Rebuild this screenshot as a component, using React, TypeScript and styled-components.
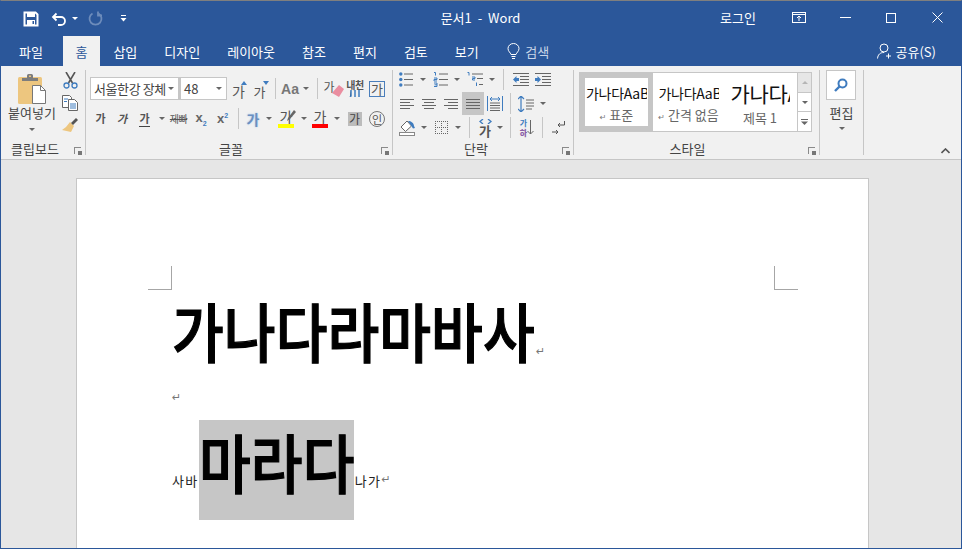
import React from 'react';
import styled, { createGlobalStyle } from 'styled-components';

const KR = `"Noto Sans CJK KR", "Noto Sans", sans-serif`;

const Global = createGlobalStyle`
  html, body { margin: 0; padding: 0; background: #e6e6e6; }
  body { font-family: ${KR}; overflow: hidden; }
  * { box-sizing: border-box; }
`;

const Blue = '#2b579a';
const IconBlue = '#3f7cbf';

const Down = () => <Caret />;

const App: React.FC = () => (
  <>
    <Global />
    <Win>
      <TitleBar>
        <Quick>
          <QuickCell $w={26} style={{ marginLeft: 17 }}>
            <svg width="16" height="16" viewBox="0 0 16 16">
              <path d="M1.5 1.5h11l2 2v11h-13z" fill="none" stroke="#fff" strokeWidth="2" />
              <rect x="4" y="2" width="8" height="4" fill="#fff" />
              <rect x="4" y="9" width="8" height="5" fill="#fff" />
              <rect x="9.5" y="10" width="1.5" height="3" fill={Blue} />
            </svg>
          </QuickCell>
          <QuickCell $w={22} style={{ marginLeft: 4 }}>
            <svg width="16" height="14" viewBox="0 0 16 14" fill="none" stroke="#fff" strokeWidth="1.8">
              <path d="M5.5 1.5 2 5l3.5 3.5" />
              <path d="M2.5 5H10a4 4 0 0 1 0 8H7" />
            </svg>
          </QuickCell>
          <LightCaret />
          <QuickCell $w={24} style={{ marginLeft: 5 }}>
            <svg width="15" height="15" viewBox="0 0 15 15" fill="none" stroke="#6d8cbb" strokeWidth="1.8">
              <path d="M10.5 2.5a6 6 0 1 1-6 0" />
              <path d="M10 .5v4h4" />
            </svg>
          </QuickCell>
          <QuickCell $w={14} style={{ marginLeft: 9 }}>
            <svg width="7" height="7" viewBox="0 0 7 7" fill="#fff">
              <rect x="1" y="0" width="5" height="1" />
              <path d="M0.5 3h6L3.5 6.5z" />
            </svg>
          </QuickCell>
        </Quick>
        <Title>문서1 - Word</Title>
        <WinButtons>
          <Login>로그인</Login>
          <WinBtn>
            <svg width="14" height="11" viewBox="0 0 14 11" fill="none" stroke="#fff">
              <rect x=".5" y=".5" width="13" height="10" />
              <path d="M.5 2.5h13M7 9V4.5M5 6l2-2 2 2" />
            </svg>
          </WinBtn>
          <WinBtn>
            <svg width="11" height="1" viewBox="0 0 11 1"><rect width="11" height="1" fill="#fff" /></svg>
          </WinBtn>
          <WinBtn>
            <svg width="10" height="10" viewBox="0 0 10 10"><rect x=".5" y=".5" width="9" height="9" fill="none" stroke="#fff" /></svg>
          </WinBtn>
          <WinBtn>
            <svg width="11" height="11" viewBox="0 0 11 11" stroke="#fff"><path d="M.5.5l10 10M10.5.5l-10 10" /></svg>
          </WinBtn>
        </WinButtons>
      </TitleBar>

      <TabBar>
        <Tab style={{ marginLeft: 4, padding: '0 14px' }}>파일</Tab>
        <Tab $active>홈</Tab>
        <Tab>삽입</Tab>
        <Tab>디자인</Tab>
        <Tab>레이아웃</Tab>
        <Tab>참조</Tab>
        <Tab>편지</Tab>
        <Tab>검토</Tab>
        <Tab>보기</Tab>
        <SearchHint>
          <svg width="13" height="17" viewBox="0 0 13 17" fill="none" stroke="#fff">
            <path d="M4 11.5C3.5 9.5 1 8.5 1 5.5a5.5 5 0 0 1 11 0c0 3-2.500 4-3 6z" />
            <path d="M4.500 13.500h4M5 15.500h3" />
          </svg>
          검색
        </SearchHint>
        <Share>
          <svg width="15" height="16" viewBox="0 0 15 16" fill="none" stroke="#fff">
            <circle cx="7" cy="5" r="4" />
            <path d="M.5 15.500C1 11.500 3 9.500 7 9.500M11.500 10.500v5M9 13h5" />
          </svg>
          공유(S)
        </Share>
      </TabBar>

      <Ribbon>
        <Group $w={84}>
          <ClipBody>
            <PasteCol>
              <svg width="30" height="31" viewBox="0 0 30 31">
                <rect x="1" y="3" width="24" height="27" rx="1.500" fill="#edc67f" />
                <path d="M5 7V4h5V1.500A1.500 1.500 0 0 1 11.500 0h3A1.500 1.500 0 0 1 16 1.500V4h5v3z" fill="#7d7d7d" />
                <rect x="12" y="1.500" width="2" height="1.500" fill="#edc67f" />
                <path d="M15.500 11.500h8l5 5v13h-13z" fill="#fff" stroke="#777" />
                <path d="M23.500 11.500v5h5" fill="none" stroke="#777" />
              </svg>
              <PasteLabel>붙여넣기</PasteLabel>
              <Down />
            </PasteCol>
            <ClipTools>
              <Cell $w={24} $h={22}>
                <svg width="15" height="17" viewBox="0 0 15 17" fill="none">
                  <path d="M3 0l6.500 11M12 0L5.500 11" stroke="#555" strokeWidth="1.600" />
                  <circle cx="3.500" cy="13.500" r="2.500" stroke={IconBlue} strokeWidth="1.300" />
                  <circle cx="11.500" cy="13.500" r="2.500" stroke={IconBlue} strokeWidth="1.300" />
                </svg>
              </Cell>
              <Cell $w={24} $h={23}>
                <svg width="16" height="16" viewBox="0 0 16 16" fill="#fff" stroke="#666">
                  <path d="M.5.5h7l2 2v10h-9z" />
                  <path d="M6.500 4.500h6l3 3v8h-9z" />
                  <path d="M8 9h6M8 11h6M8 13h6M2 4h4M2 6.500h3" stroke={IconBlue} />
                </svg>
              </Cell>
              <Cell $w={24} $h={23}>
                <svg width="16" height="15" viewBox="0 0 16 15">
                  <path d="M8 4l4 4-3 6-9-2 4-3z" fill="#edc67f" />
                  <path d="M9 5l5-5 2 2-5 5z" fill="#555" />
                </svg>
              </Cell>
            </ClipTools>
          </ClipBody>
          <GroupLabel $shift={16}>클립보드<Launcher /></GroupLabel>
        </Group>
        <Sep />

        <Group $w={306}>
          <FontBody>
            <Row>
              <Combo $w={90}><FontName>서울한강 장체</FontName><Down /></Combo>
              <Combo $w={47} style={{ marginRight: 3 }}>48<Down /></Combo>
              <Cell $w={20}><Ga>가</Ga><Mark $dir="up" /></Cell>
              <Cell $w={22}><Ga $small>가</Ga><Mark $dir="down" /></Cell>
              <Cell $w={7}><VLine /></Cell>
              <Cell $w={22}><Aa>Aa</Aa></Cell>
              <Cell $w={10}><Down /></Cell>
              <Cell $w={12}><VLine /></Cell>
              <Cell $w={21}>
                <EraseGa>가</EraseGa>
                <svg width="12" height="12" viewBox="0 0 12 12" style={{ marginLeft: -3, marginTop: 4 }}>
                  <path d="M7 0l5 4-5 8-7-4z" fill="#ea8ea0" />
                </svg>
              </Cell>
              <Cell $w={22}>
                <Stack>
                  <Tiny>내천</Tiny>
                  <svg width="12" height="7" viewBox="0 0 12 7" stroke={IconBlue} strokeWidth="1.500">
                    <path d="M2 0v6l-1 1M6 0v7M10 0v7" />
                  </svg>
                </Stack>
              </Cell>
              <Cell $w={22}><BoxGa>가</BoxGa></Cell>
            </Row>
            <Row $gap={7}>
              <Cell $w={21}><Ga $bold $tiny>가</Ga></Cell>
              <Cell $w={22}><Ga $bold $italic $tiny>가</Ga></Cell>
              <Cell $w={23}><Ga $bold $tiny $under>가</Ga></Cell>
              <Cell $w={11}><Down /></Cell>
              <Cell $w={23}><Strike>제빠</Strike></Cell>
              <Cell $w={22}><Script>x<sub>2</sub></Script></Cell>
              <Cell $w={21}><Script>x<sup>2</sup></Script></Cell>
              <Cell $w={10}><VLine /></Cell>
              <Cell $w={20}><GlowGa>가</GlowGa></Cell>
              <Cell $w={11}><Down /></Cell>
              <Cell $w={24}>
                <ColorGa $bar="#ffff00">가</ColorGa>
                <Pen width="9" height="11" viewBox="0 0 9 11"><path d="M7 0l2 2-6 7-3 2 1-3z" fill="#666" /></Pen>
              </Cell>
              <Cell $w={11}><Down /></Cell>
              <Cell $w={22}><ColorGa $bar="#ff0000">가</ColorGa></Cell>
              <Cell $w={12}><Down /></Cell>
              <Cell $w={23}><ShadeGa>가</ShadeGa></Cell>
              <Cell $w={22}><RingGa>인</RingGa></Cell>
            </Row>
          </FontBody>
          <GroupLabel $shift={16}>글꼴<Launcher /></GroupLabel>
        </Group>
        <Sep />

        <Group $w={180}>
          <ParaBody>
            <ParaRow>
              <Cell $w={20}><ListIcon kind="bullet" /></Cell>
              <Cell $w={14}><Down /></Cell>
              <Cell $w={21}><ListIcon kind="number" /></Cell>
              <Cell $w={12}><Down /></Cell>
              <Cell $w={24}><ListIcon kind="multi" /></Cell>
              <Cell $w={10}><Down /></Cell>
              <Cell $w={13}><VLine /></Cell>
              <Cell $w={22}><IndentIcon dir="out" /></Cell>
              <Cell $w={22}><IndentIcon dir="in" /></Cell>
            </ParaRow>
            <ParaRow>
              <Cell $w={22}><AlignIcon kind="left" /></Cell>
              <Cell $w={22}><AlignIcon kind="center" /></Cell>
              <Cell $w={22}><AlignIcon kind="right" /></Cell>
              <Cell $w={22} $on><AlignIcon kind="justify" /></Cell>
              <Cell $w={22}>
                <svg width="16" height="16" viewBox="0 0 16 16" fill="none">
                  <path d="M.5 0v15M15.500 0v15" stroke={IconBlue} />
                  <path d="M3 3h10M3 3l2-2M3 3l2 2M13 3l-2-2M13 3l-2 2" stroke={IconBlue} />
                  <path d="M3 7h10M3 9.500h10M3 12h10M3 14.500h10" stroke="#666" />
                </svg>
              </Cell>
              <Cell $w={8}><VLine /></Cell>
              <Cell $w={24}>
                <svg width="16" height="16" viewBox="0 0 16 16" fill="none">
                  <path d="M3 0v16M0 3l3-3 3 3M0 13l3 3 3-3" stroke={IconBlue} strokeWidth="1.200" />
                  <path d="M8 4h8M8 7h8M8 10h8M8 13h6" stroke="#666" />
                </svg>
              </Cell>
              <Cell $w={10}><Down /></Cell>
            </ParaRow>
            <ParaRow>
              <Cell $w={22}>
                <svg width="17" height="16" viewBox="0 0 17 16" fill="none">
                  <path d="M8 1L2 7l4.500 4.500L12.500 6z" stroke="#666" fill="#fff" />
                  <path d="M9 1c3 0 6 2 6 5l1 2-2 .5z" fill={IconBlue} />
                  <rect x=".5" y="12.500" width="15" height="3" stroke="#888" fill="#fff" />
                </svg>
              </Cell>
              <Cell $w={12}><Down /></Cell>
              <Cell $w={22}>
                <svg width="13" height="13" viewBox="0 0 13 13" stroke="#666" strokeDasharray="1 1">
                  <path d="M.5 0v13M6.500 0v13M12.500 0v13M0 .5h13M0 6.500h13M0 12.500h13" />
                </svg>
              </Cell>
              <Cell $w={12}><Down /></Cell>
              <Cell $w={10}><VLine /></Cell>
              <Cell $w={22}>
                <Stack>
                  <svg width="15" height="5" viewBox="0 0 15 5" stroke={IconBlue} strokeWidth="1.300" fill="none">
                    <path d="M5 0L2 2.500 5 5M10 0l3 2.500L10 5" />
                  </svg>
                  <DirGa>가</DirGa>
                </Stack>
              </Cell>
              <Cell $w={8}><Down /></Cell>
              <Cell $w={12}><VLine /></Cell>
              <Cell $w={22}>
                <SortGa>
                  <span>가</span>
                  <b>하</b>
                </SortGa>
                <svg width="7" height="15" viewBox="0 0 7 15" fill="none" stroke="#666"><path d="M3.500 0v14M.5 11l3 3 3-3" /></svg>
              </Cell>
              <Cell $w={8}><VLine /></Cell>
              <Cell $w={24}>
                <svg width="13" height="14" viewBox="0 0 13 14" fill="none" stroke="#555">
                  <path d="M12.500 0v4H6M8 2L6 4l2 2" />
                  <path d="M0 11h6M4 9l2 2-2 2" />
                </svg>
              </Cell>
            </ParaRow>
          </ParaBody>
          <GroupLabel $shift={14}>단락<Launcher /></GroupLabel>
        </Group>
        <Sep />

        <Group $w={245}>
          <Gallery>
            <Styles>
              <StyleItem $on $w={73}>
                <Sample $w={61}>가나다AaB</Sample>
                <StyleName><Ret>↵</Ret> 표준</StyleName>
              </StyleItem>
              <StyleItem $w={71}>
                <Sample $w={60}>가나다AaB</Sample>
                <StyleName><Ret>↵</Ret> 간격 없음</StyleName>
              </StyleItem>
              <StyleItem $w={72}>
                <Sample $w={59} $big>가나다A</Sample>
                <StyleName>제목 1</StyleName>
              </StyleItem>
            </Styles>
            <Scroller>
              <ScrollBtn $off><UpCaret /></ScrollBtn>
              <ScrollBtn><Down /></ScrollBtn>
              <ScrollBtn $last>
                <svg width="7" height="6" viewBox="0 0 7 6" fill="#666"><rect x="0" y="0" width="7" height="1" /><path d="M0 2.500h7L3.500 6z" /></svg>
              </ScrollBtn>
            </Scroller>
          </Gallery>
          <GroupLabel $shift={18}>스타일<Launcher /></GroupLabel>
        </Group>
        <Sep />

        <Group $w={43}>
          <EditCol>
            <EditBtn>
              <svg width="14" height="14" viewBox="0 0 14 14" fill="none" stroke={IconBlue}>
                <circle cx="8.500" cy="5.500" r="4" strokeWidth="2" />
                <path d="M5.500 8.500L1 13" strokeWidth="2.400" />
              </svg>
            </EditBtn>
            <EditLabel>편집</EditLabel>
            <Down />
          </EditCol>
        </Group>
        <Sep />
        <Collapse>
          <svg width="9" height="6" viewBox="0 0 9 6" fill="none" stroke="#555" strokeWidth="1.600"><path d="M.5 5l4-4 4 4" /></svg>
        </Collapse>
      </Ribbon>

      <DocArea>
        <Page>
          <Marks>
            <CropMark $side="left" />
            <CropMark $side="right" />
          </Marks>
          <BigLine>
            <BigText $w={364} $line={84}><span>가나다라마바사</span></BigText>
            <Pil $big>↵</Pil>
          </BigLine>
          <EmptyLine><Pil>↵</Pil></EmptyLine>
          <MixedLine>
            <Small>사바</Small>
            <Selected><BigText $w={155} $line={80}><span>마라다</span></BigText></Selected>
            <Small>나가</Small>
            <Pil $low>↵</Pil>
          </MixedLine>
        </Page>
      </DocArea>
    </Win>
  </>
);

const ListIcon: React.FC<{ kind: 'bullet' | 'number' | 'multi' }> = ({ kind }) => {
  if (kind === 'bullet') {
    return (
      <svg width="15" height="15" viewBox="0 0 15 15">
        <circle cx="1.800" cy="2" r="1.700" fill={IconBlue} />
        <circle cx="1.800" cy="7.500" r="1.700" fill={IconBlue} />
        <circle cx="1.800" cy="13" r="1.700" fill={IconBlue} />
        <path d="M5 2h9M5 7.500h9M5 13h9" stroke="#666" />
      </svg>
    );
  }
  if (kind === 'number') {
    return (
      <svg width="15" height="15" viewBox="0 0 15 15">
        <path d="M1 .5h1.500v3M1 6h3v1.500H1V9h3M1 11h3v3.500H1M1.500 12.800H4" stroke={IconBlue} fill="none" />
        <path d="M6 2h9M6 7.500h9M6 13h9" stroke="#666" />
      </svg>
    );
  }
  return (
    <svg width="17" height="15" viewBox="0 0 17 15">
      <path d="M.5.500H2v3M5 5h3v1.500H5.500V8H8M9.500 10.500V14" stroke={IconBlue} fill="none" />
      <path d="M5 2h11M10 6.500h6M12 12.500h4" stroke="#666" />
    </svg>
  );
};

const IndentIcon: React.FC<{ dir: 'in' | 'out' }> = ({ dir }) => (
  <svg width="16" height="13" viewBox="0 0 16 13">
    <path d="M0 .5h16M7 3.500h9M7 6.500h9M7 9.500h9M0 12.500h16" stroke="#666" />
    <path d={dir === 'out' ? 'M0 6.500L3.500 3v2H6v3H3.500v2z' : 'M6 6.500L2.500 3v2H0v3h2.500v2z'} fill={IconBlue} />
  </svg>
);

const AlignIcon: React.FC<{ kind: 'left' | 'center' | 'right' | 'justify' }> = ({ kind }) => {
  const d = {
    left: 'M0 1.500h14M0 4.500h10M0 7.500h14M0 10.500h10',
    center: 'M0 1.500h14M2 4.500h10M0 7.500h14M2 10.500h10',
    right: 'M0 1.500h14M4 4.500h10M0 7.500h14M4 10.500h10',
    justify: 'M0 1.500h14M0 4.500h14M0 7.500h14M0 10.500h14',
  }[kind];
  return (
    <svg width="14" height="12" viewBox="0 0 14 12"><path d={d} stroke="#666" /></svg>
  );
};

const Win = styled.div`
  width: 962px;
  height: 549px;
  display: flex;
  flex-direction: column;
  border: 1px solid ${Blue};
  border-top-color: #7f7f7f;
  background: #e6e6e6;
  overflow: hidden;
`;

const TitleBar = styled.header`
  height: 35px;
  flex: none;
  display: grid;
  grid-template-columns: 1fr auto 1fr;
  align-items: center;
  background: ${Blue};
  color: #fff;
  font-size: 13px;
`;

const Quick = styled.div`
  display: flex;
  align-items: center;
`;

const QuickCell = styled.div<{ $w: number }>`
  width: ${p => p.$w}px;
  display: flex;
  align-items: center;
  justify-content: center;
`;

const Title = styled.div`
  margin: -2px 0 0 -1px;
  font-size: 13px;
  word-spacing: 3px;
  color: #fff;
`;

const WinButtons = styled.div`
  display: flex;
  justify-content: flex-end;
  align-items: center;
  height: 100%;
  margin-top: -2px;
  padding-right: 1px;
`;

const Login = styled.div`
  margin-right: 20px;
  font-size: 13px;
`;

const WinBtn = styled.div`
  width: 46px;
  height: 100%;
  display: flex;
  align-items: center;
  justify-content: center;
`;

const TabBar = styled.nav`
  height: 30px;
  flex: none;
  display: flex;
  align-items: stretch;
  background: ${Blue};
  color: #fff;
  font-size: 13px;
`;

const Tab = styled.div<{ $active?: boolean }>`
  display: flex;
  align-items: center;
  padding: 0 ${p => (p.$active ? 12.5 : 13.5)}px;
  margin-left: ${p => (p.$active ? 6 : 0)}px;
  background: ${p => (p.$active ? '#f1f1f1' : 'transparent')};
  color: ${p => (p.$active ? Blue : '#fff')};
`;

const SearchHint = styled.div`
  display: flex;
  align-items: center;
  gap: 5px;
  margin-left: 15px;
  color: #c9d5e8;
`;

const Share = styled.div`
  display: flex;
  align-items: center;
  gap: 4px;
  margin-left: auto;
  margin-right: 25px;
`;

const Ribbon = styled.section`
  height: 94px;
  flex: none;
  display: flex;
  padding-top: 2px;
  background: #f1f1f1;
  border-bottom: 1px solid #c6c6c6;
  color: #444;
  font-size: 13px;
`;

const Sep = styled.div`
  flex: none;
  width: 1px;
  margin: 2px 0 4px;
  background: #c6c6c6;
`;

const Group = styled.div<{ $w: number }>`
  flex: none;
  width: ${p => p.$w}px;
  display: flex;
  flex-direction: column;
`;

const GroupLabel = styled.div<{ $shift?: number }>`
  position: relative;
  margin-top: auto;
  height: 19px;
  padding-bottom: 2px;
  padding-right: ${p => p.$shift || 0}px;
  display: flex;
  align-items: center;
  justify-content: center;
  font-size: 13px;
  color: #444;
`;

const Launcher = styled.i`
  position: absolute;
  right: 4px;
  top: 7px;
  width: 7px;
  height: 7px;
  border-left: 1px solid #8a8a8a;
  border-top: 1px solid #8a8a8a;
  &::after {
    content: '';
    position: absolute;
    right: -1px;
    bottom: -1px;
    width: 4px;
    height: 4px;
    background: #777;
  }
`;

const Caret = styled.i`
  display: inline-block;
  flex: none;
  width: 0;
  height: 0;
  border-left: 3px solid transparent;
  border-right: 3px solid transparent;
  border-top: 3px solid #666;
`;

const UpCaret = styled(Caret)`
  border-top: 0;
  border-bottom: 3px solid #b5b5b5;
`;

const LightCaret = styled(Caret)`
  border-top-color: #fff;
  margin-left: 2px;
`;

const ClipBody = styled.div`
  display: flex;
  padding-left: 3px;
`;

const PasteCol = styled.div`
  width: 56px;
  padding-top: 6px;
  display: flex;
  flex-direction: column;
  align-items: center;
`;

const PasteLabel = styled.div`
  margin: -1px 0 6px;
  line-height: 18px;
  white-space: nowrap;
`;

const ClipTools = styled.div`
  margin-left: -2px;
  margin-top: 1px;
  display: flex;
  flex-direction: column;
`;

const Cell = styled.div<{ $w: number; $h?: number; $on?: boolean }>`
  flex: none;
  position: relative;
  width: ${p => p.$w}px;
  height: ${p => (p.$h ? `${p.$h}px` : '100%')};
  display: flex;
  align-items: center;
  justify-content: center;
  background: ${p => (p.$on ? '#c6c6c6' : 'transparent')};
`;

const VLine = styled.div`
  width: 1px;
  height: 21px;
  background: #c6c6c6;
`;

const FontBody = styled.div`
  padding: 9px 0 0 4px;
`;

const Row = styled.div<{ $gap?: number }>`
  display: flex;
  height: 23px;
  margin-top: ${p => p.$gap || 0}px;
`;

const Combo = styled.div<{ $w: number }>`
  flex: none;
  width: ${p => p.$w}px;
  height: 23px;
  padding: 0 4px 0 3px;
  display: flex;
  align-items: center;
  justify-content: space-between;
  background: #fff;
  border: 1px solid #c6c6c6;
  border-right-width: ${p => (p.$w === 90 ? 2 : 1)}px;
  font-size: 13px;
  white-space: nowrap;
  overflow: hidden;
`;

const FontName = styled.span`
  letter-spacing: -0.4px;
`;

const Ga = styled.span<{ $small?: boolean; $bold?: boolean; $italic?: boolean; $tiny?: boolean; $under?: boolean }>`
  font-size: ${p => (p.$tiny ? 11 : p.$small ? 13 : 14)}px;
  font-weight: ${p => (p.$bold ? 700 : 400)};
  font-style: ${p => (p.$italic ? 'italic' : 'normal')};
  color: #555;
  line-height: 15px;
  margin-top: ${p => (p.$tiny ? 0 : 5)}px;
  margin-left: ${p => (p.$tiny ? 0 : -3)}px;
  border-bottom: ${p => (p.$under ? '1px solid #444' : '0')};
`;

const EraseGa = styled.span`
  margin-top: -4px;
  font-size: 12px;
  color: #555;
`;

const Mark = styled.i<{ $dir: 'up' | 'down' }>`
  position: absolute;
  right: 3px;
  top: 4px;
  width: 0;
  height: 0;
  border-left: 3px solid transparent;
  border-right: 3px solid transparent;
  ${p =>
    p.$dir === 'up'
      ? `border-bottom: 4px solid ${IconBlue};`
      : `border-top: 4px solid ${IconBlue};`}
`;

const Aa = styled.span`
  font-family: "Liberation Sans", sans-serif;
  font-size: 14px;
  font-weight: 700;
  color: #777;
`;

const Stack = styled.div`
  display: flex;
  flex-direction: column;
  align-items: center;
`;

const Tiny = styled.span`
  font-size: 10px;
  line-height: 10px;
  font-weight: 700;
  letter-spacing: -0.5px;
  color: #555;
`;

const BoxGa = styled.span`
  width: 16px;
  height: 16px;
  display: flex;
  align-items: center;
  justify-content: center;
  border: 1px solid #4a7ebb;
  font-size: 13px;
  color: #555;
`;

const Strike = styled.span`
  font-size: 10px;
  letter-spacing: -0.5px;
  color: #555;
  text-decoration: line-through;
`;

const Script = styled.span`
  font-family: "Liberation Sans", sans-serif;
  font-size: 13px;
  font-weight: 700;
  color: #666;
  sub, sup {
    font-size: 7px;
    color: ${IconBlue};
  }
`;

const GlowGa = styled.span`
  font-size: 14px;
  font-weight: 700;
  color: #6b8fbf;
  text-shadow: 0 0 2px #9cc0ea;
`;

const ColorGa = styled.span<{ $bar: string }>`
  font-size: 14px;
  line-height: 15px;
  color: #555;
  width: 16px;
  text-align: center;
  border-bottom: 4px solid ${p => p.$bar};
`;

const Pen = styled.svg`
  position: absolute;
  right: 2px;
  top: 3px;
`;

const ShadeGa = styled.span`
  width: 14px;
  height: 14px;
  display: flex;
  align-items: center;
  justify-content: center;
  background: #bcbcbc;
  font-size: 12px;
  color: #444;
`;

const RingGa = styled.span`
  width: 16px;
  height: 16px;
  display: flex;
  align-items: center;
  justify-content: center;
  border: 1px solid #777;
  border-radius: 50%;
  font-size: 11px;
  color: #555;
`;

const ParaBody = styled.div`
  padding-left: 3px;
  display: flex;
  flex-direction: column;
`;

const ParaRow = styled.div`
  display: flex;
  height: 23px;
  margin-bottom: 1px;
`;

const DirGa = styled.span`
  font-size: 13px;
  line-height: 13px;
  font-weight: 700;
  color: #555;
`;

const SortGa = styled.div`
  display: flex;
  flex-direction: column;
  align-items: center;
  font-size: 8px;
  font-weight: 700;
  color: ${IconBlue};
  span, b {
    line-height: 10px;
  }
  b {
    color: #8a5fa8;
  }
`;

const Gallery = styled.div`
  margin: 4px 0 0 5px;
  width: 233px;
  height: 60px;
  display: flex;
  background: #fff;
  border: 1px solid #c6c6c6;
`;

const Styles = styled.div`
  flex: 1;
  display: flex;
`;

const StyleItem = styled.div<{ $on?: boolean; $w: number }>`
  width: ${p => p.$w}px;
  height: 100%;
  display: flex;
  flex-direction: column;
  align-items: center;
  border: 5px solid ${p => (p.$on ? '#c6c6c6' : 'transparent')};
`;

const Sample = styled.div<{ $w: number; $big?: boolean }>`
  width: ${p => p.$w}px;
  height: 30px;
  overflow: hidden;
  white-space: nowrap;
  line-height: 30px;
  font-size: ${p => (p.$big ? 21 : 14)}px;
  letter-spacing: -0.3px;
  color: #111;
`;

const StyleName = styled.div`
  margin-top: 4px;
  font-size: 13px;
  line-height: 16px;
  white-space: nowrap;
  color: #666;
`;

const Ret = styled.span`
  font-family: "DejaVu Sans", sans-serif;
  font-size: 8px;
  color: #777;
`;

const Scroller = styled.div`
  width: 14px;
  flex: none;
  display: flex;
  flex-direction: column;
  border-left: 1px solid #c6c6c6;
`;

const ScrollBtn = styled.div<{ $off?: boolean; $last?: boolean }>`
  flex: 1;
  display: flex;
  align-items: center;
  justify-content: center;
  background: ${p => (p.$off ? '#e6e6e6' : '#fff')};
  border-bottom: ${p => (p.$last ? '0' : '1px solid #c6c6c6')};
`;

const EditCol = styled.div`
  padding-top: 2px;
  display: flex;
  flex-direction: column;
  align-items: center;
`;

const EditBtn = styled.div`
  width: 30px;
  height: 30px;
  margin-right: 2px;
  display: flex;
  align-items: center;
  justify-content: center;
  background: #fff;
  border: 1px solid #c6c6c6;
`;

const EditLabel = styled.div`
  margin: 4px 0 5px;
  line-height: 18px;
  font-size: 13px;
`;

const Collapse = styled.div`
  flex: 1;
  display: flex;
  align-items: flex-end;
  justify-content: flex-end;
  padding: 0 11px 5px 0;
`;

const DocArea = styled.main`
  flex: 1;
  min-height: 0;
  padding: 18px 0 0 75px;
  background: #e6e6e6;
`;

const Page = styled.div`
  width: 793px;
  height: 600px;
  padding: 87px 70px 0 71px;
  background: #fff;
  border: 1px solid #c6c6c6;
`;

const Marks = styled.div`
  display: flex;
  justify-content: space-between;
  height: 24px;
`;

const CropMark = styled.div<{ $side: 'left' | 'right' }>`
  width: 24px;
  height: 24px;
  border-bottom: 1px solid #a6a6a6;
  ${p =>
    p.$side === 'left'
      ? 'border-right: 1px solid #a6a6a6;'
      : 'border-left: 1px solid #a6a6a6;'}
`;

const BigLine = styled.div`
  margin: -3px 0 0 24px;
  height: 84px;
  display: flex;
  align-items: flex-end;
`;

const BigText = styled.div<{ $w: number; $line: number }>`
  width: ${p => p.$w}px;
  height: ${p => p.$line}px;
  line-height: ${p => p.$line}px;
  white-space: nowrap;
  color: #000;
  span {
    display: inline-block;
    font-size: 64px;
    font-weight: 500;
    -webkit-text-stroke: 1.2px #000;
    transform: scaleX(0.88);
    transform-origin: left center;
  }
`;

const Pil = styled.span<{ $big?: boolean; $low?: boolean }>`
  font-family: "DejaVu Sans", sans-serif;
  font-size: 11px;
  line-height: 14px;
  color: #777;
  margin-bottom: ${p => (p.$big ? 12 : 0)}px;
  margin-top: ${p => (p.$low ? 20 : 0)}px;
`;

const EmptyLine = styled.div`
  margin: 15px 0 0 24px;
  height: 16px;
  line-height: 16px;
`;

const MixedLine = styled.div`
  margin: 18px 0 0 24px;
  display: flex;
  align-items: center;
`;

const Small = styled.span`
  margin-top: 20px;
  font-size: 13px;
  color: #222;
  letter-spacing: 1.4px;
`;

const Selected = styled.div`
  width: 155px;
  height: 100px;
  margin: 0 1px 0 0;
  background: #c6c6c6;
`;

export default App;
